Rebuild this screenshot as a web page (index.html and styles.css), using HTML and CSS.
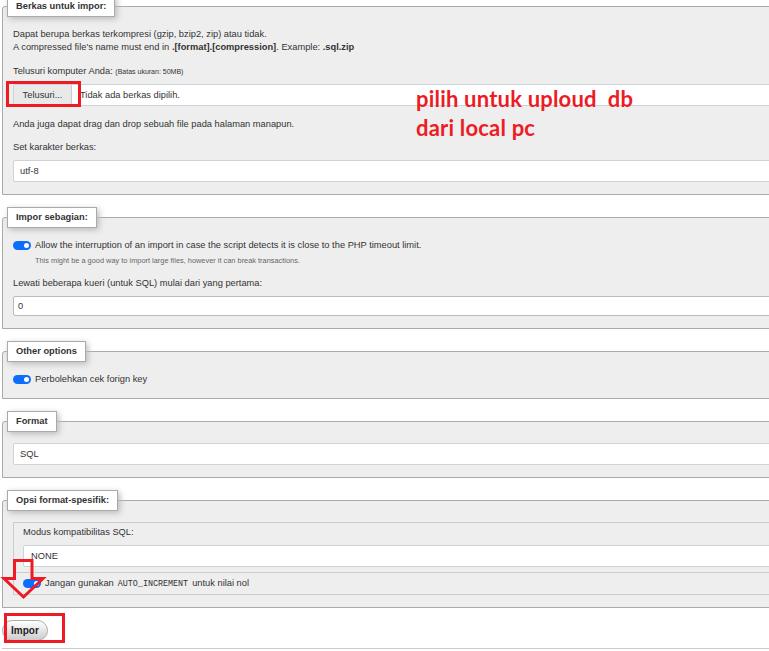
FILE: index.html
```html
<!DOCTYPE html>
<html lang="id">
<head>
    <meta charset="UTF-8">
    <meta name="viewport" content="width=device-width, initial-scale=1.0">
    <title>Impor</title>
    <link rel="stylesheet" href="styles.css">
</head>
<body>
    <div class="page">
        <fieldset class="box">
            <legend>Berkas untuk impor:</legend>
            <p class="intro">Dapat berupa berkas terkompresi (gzip, bzip2, zip) atau tidak.<br>
            A compressed file's name must end in <b>.[format].[compression]</b>. Example: <b>.sql.zip</b></p>
            <p class="label">Telusuri komputer Anda: <span class="hint">(Batas ukuran: 50MB)</span></p>
            <div class="field file">
                <span class="file-btn">Telusuri...</span>
                <span class="file-name">Tidak ada berkas dipilih.</span>
            </div>
            <p class="after">Anda juga dapat drag dan drop sebuah file pada halaman manapun.</p>
            <p class="label">Set karakter berkas:</p>
            <div class="field">utf-8</div>
        </fieldset>

        <fieldset class="box">
            <legend>Impor sebagian:</legend>
            <div class="check"><span class="switch"></span>Allow the interruption of an import in case the script detects it is close to the PHP timeout limit.</div>
            <p class="desc">This might be a good way to import large files, however it can break transactions.</p>
            <p class="label">Lewati beberapa kueri (untuk SQL) mulai dari yang pertama:</p>
            <div class="field number">0</div>
        </fieldset>

        <fieldset class="box">
            <legend>Other options</legend>
            <div class="check"><span class="switch"></span>Perbolehkan cek forign key</div>
        </fieldset>

        <fieldset class="box">
            <legend>Format</legend>
            <div class="field">SQL</div>
        </fieldset>

        <fieldset class="box">
            <legend>Opsi format-spesifik:</legend>
            <ul class="list">
                <li class="item">
                    <p class="label">Modus kompatibilitas SQL:</p>
                    <div class="field wide">NONE</div>
                </li>
                <li class="item">
                    <div class="check"><span class="switch"></span>Jangan gunakan <code>AUTO_INCREMENT</code> untuk nilai nol</div>
                </li>
            </ul>
        </fieldset>

        <button class="submit">Impor</button>
        <div class="rule"></div>
    </div>

    <!-- coretan merah di atas screenshot -->
    <div class="mark mark-browse"></div>
    <div class="mark mark-submit"></div>
    <svg class="arrow" width="50" height="48" viewBox="0 0 50 48">
        <polygon points="14.5,5.5 32,5.5 32,23.5 43,23.5 23.5,42 4,23.5 14.5,23.5" fill="none" stroke="#ed1c24" stroke-width="3"/>
    </svg>
    <p class="note">pilih untuk uploud&nbsp; db<br>dari local pc</p>
</body>
</html>
```

FILE: styles.css
```css
html, body {
    overflow: hidden;
}
body {
    margin: 0;
    font-family: "Liberation Sans", Arial, sans-serif;
    font-size: 9.3px;
    line-height: 13px;
    color: #333;
    background: #fff;
}
p {
    margin: 0;
}
.page {
    width: 800px;
    padding-left: 2px;
    margin-top: -4px;
}

.box {
    margin: 0 0 12px;
    padding: 11px 10px 12px;
    border: 1px solid #aaa;
    border-radius: 3px 3px 0 0;
    background: #eee;
    min-width: 0;
}
.box legend {
    margin-left: -6px;
    padding: 4px 8px;
    line-height: 11px;
    font-size: 9.3px;
    font-weight: bold;
    color: #333;
    background: #fff;
    border: 1px solid #aaa;
    box-shadow: 2px 2px 6px #bbb;
}

.intro {
    margin-bottom: 11px;
}
.label {
    margin-bottom: 6px;
}
.hint {
    font-size: 7px;
}
.after {
    margin: 12px 0 10px;
}

.field {
    height: 22px;
    line-height: 20px;
    padding: 0 6px;
    background: #fff;
    border: 1px solid #cdd3db;
    border-radius: 2px;
    box-sizing: border-box;
}
.field.number {
    height: 20px;
    line-height: 18px;
    padding: 0 4px;
    border-color: #bbb;
}
.field.wide {
    padding: 0 7px;
}
.file {
    display: flex;
    padding: 0;
}
.file-btn {
    width: 57px;
    text-align: center;
    background: #e9e9e9;
    border-right: 1px solid #ccc;
}
.file-name {
    padding-left: 8px;
}

.check {
    display: flex;
    align-items: center;
    gap: 4px;
    height: 13px;
}
.switch {
    position: relative;
    width: 18px;
    height: 9px;
    border-radius: 5px;
    background: #0d6efd;
}
.switch::after {
    content: "";
    position: absolute;
    right: 2px;
    top: 2px;
    width: 5px;
    height: 5px;
    border-radius: 50%;
    background: #fff;
}
.desc {
    margin: 3px 0 11px 22px;
    line-height: 11px;
    font-size: 7.4px;
    color: #666;
}
code {
    font-family: "Liberation Mono", monospace;
    font-size: 8.4px;
    line-height: 10px;
}

.list {
    margin: 0;
    padding: 0;
    list-style: none;
    border: 1px solid #ccc;
}
.item {
    padding: 3px 9px 5px;
}
.item + .item {
    padding: 4px 9px 4px;
    border-top: 1px solid #ccc;
}

.submit {
    display: block;
    margin: 0;
    height: 21px;
    padding: 0 8px;
    font-family: "Liberation Sans", Arial, sans-serif;
    font-size: 10px;
    font-weight: bold;
    color: #222;
    border: 1px solid #aaa;
    border-radius: 11px;
    background: linear-gradient(#fff, #ccc);
}
.rule {
    margin-top: 7px;
    border-top: 1px solid #ccc;
}

.mark {
    position: absolute;
    border: 3px solid #ed1c24;
    box-sizing: border-box;
}
.mark-browse {
    left: 6px;
    top: 81px;
    width: 75px;
    height: 26px;
}
.mark-submit {
    left: 4px;
    top: 613px;
    width: 61px;
    height: 30px;
}
.arrow {
    position: absolute;
    left: 0;
    top: 555px;
}
.note {
    position: absolute;
    left: 416px;
    top: 84px;
    margin: 0;
    font-family: Lato, "Open Sans", sans-serif;
    font-size: 22px;
    font-weight: bold;
    letter-spacing: 0.2px;
    line-height: 29px;
    color: #ed1c24;
}
```
